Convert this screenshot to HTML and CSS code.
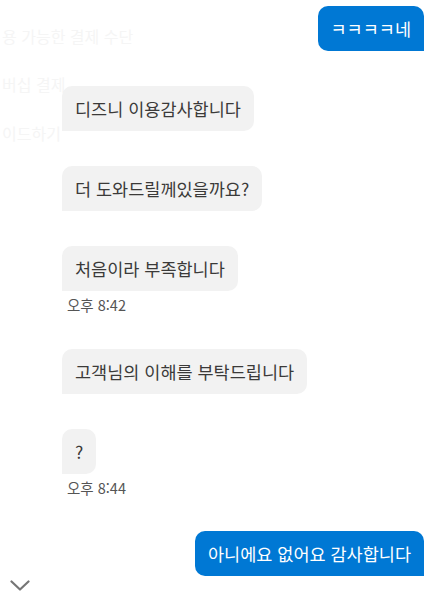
FILE: index.html
```html
<!DOCTYPE html>
<html lang="ko">
<head>
<meta charset="utf-8">
<link rel="stylesheet" href="styles.css">
</head>
<body>
<div class="ghost">
  <div class="ghost-line g1">용 가능한 결제 수단</div>
  <div class="ghost-line g2">버십 결제</div>
  <div class="ghost-line g3">이드하기</div>
</div>
<div class="chat">
  <div class="msg out m-first"><div class="bubble">ㅋㅋㅋㅋ네</div></div>
  <div class="msg in m1"><div class="bubble">디즈니 이용감사합니다</div></div>
  <div class="msg in m2"><div class="bubble">더 도와드릴께있을까요?</div></div>
  <div class="msg in m2"><div class="bubble">처음이라 부족합니다</div><div class="time">오후 8:42</div></div>
  <div class="msg in m3"><div class="bubble">고객님의 이해를 부탁드립니다</div></div>
  <div class="msg in m4"><div class="bubble">?</div><div class="time">오후 8:44</div></div>
  <div class="msg out m5"><div class="bubble">아니에요 없어요 감사합니다</div></div>
  <div class="scroll-down">
    <svg width="20" height="11" viewBox="0 0 20 11"><path d="M1.5 1.5 L10 9.5 L18.5 1.5" fill="none" stroke="#767676" stroke-width="2.2" stroke-linecap="round" stroke-linejoin="round"/></svg>
  </div>
</div>
</body>
</html>
```

FILE: styles.css
```css
* { box-sizing: border-box; }
html, body { margin: 0; padding: 0; background: #fff; }
body {
  width: 437px;
  height: 593px;
  overflow: hidden;
  position: relative;
  font-family: "Segoe UI", "Noto Sans CJK KR", "Noto Sans", sans-serif;
  color: #323130;
}
.ghost {
  position: absolute;
  left: 0;
  top: 0;
  color: #f5f5f5;
  font-size: 16px;
  font-family: "Noto Sans CJK KR", sans-serif;
}
.ghost-line { position: absolute; white-space: nowrap; left: 2px; }
.g1 { top: 24px; }
.g2 { top: 72px; }
.g3 { top: 121px; }
.chat {
  position: relative;
  display: flex;
  flex-direction: column;
  padding: 6px 13px 0 62px;
}
.msg { display: flex; flex-direction: column; }
.msg.out { align-items: flex-end; }
.msg.in { align-items: flex-start; }
.bubble {
  font-family: "Noto Sans CJK KR", sans-serif;
  font-size: 17.5px;
  line-height: 21px;
  padding: 12px 13px;
  height: 45px;
  white-space: nowrap;
}
.in .bubble {
  background: #f2f2f2;
  color: #3b3a39;
  border-radius: 10px 10px 10px 0;
}
.out .bubble {
  background: #0078d4;
  color: #fff;
  border-radius: 10px 10px 0 10px;
}
.m1 { margin-top: 35px; }
.m2 { margin-top: 35px; }
.m3 { margin-top: 35px; }
.m4 { margin-top: 35px; }
.m5 { margin-top: 34px; }
.time {
  font-family: "Noto Sans CJK KR", sans-serif;
  font-size: 14.5px;
  color: #555;
  margin: 5px 0 0 5px;
  line-height: 18px;
}
.scroll-down {
  margin-left: -52px;
  margin-top: 4px;
  height: 12px;
}
.scroll-down svg { display: block; }
```
